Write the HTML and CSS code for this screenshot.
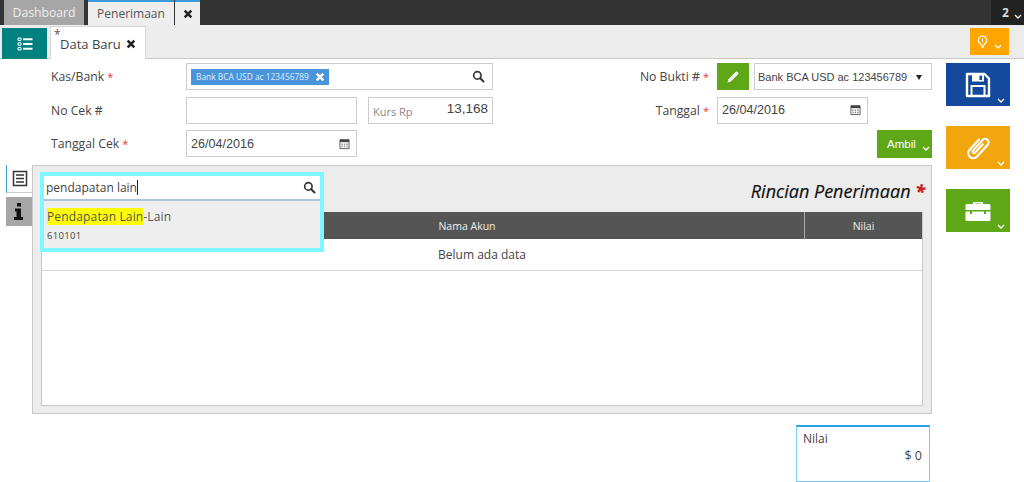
FILE: index.html
```html
<!DOCTYPE html>
<html lang="id">
<head>
<meta charset="utf-8">
<title>Penerimaan</title>
<link rel="stylesheet" href="styles.css">
</head>
<body>
<svg class="defs" width="0" height="0">
  <defs>
    <symbol id="i-search" viewBox="0 0 14 14"><circle cx="5.8" cy="5.8" r="4" fill="none" stroke="currentColor" stroke-width="1.8"/><path d="M8.8 8.8l3.6 3.6" stroke="currentColor" stroke-width="2.2" stroke-linecap="round"/></symbol>
    <symbol id="i-x" viewBox="0 0 12 12"><path d="M2 2l8 8M10 2l-8 8" stroke="currentColor" stroke-width="3" fill="none"/></symbol>
    <symbol id="i-chev" viewBox="0 0 8 5"><path d="M1 1l3 3 3-3" stroke="currentColor" stroke-width="1.3" fill="none"/></symbol>
    <symbol id="i-cal" viewBox="0 0 12 12"><path d="M1 1.500h10V11H1z" fill="#fff" stroke="#555"/><path d="M1 1h10v3H1z" fill="#444"/><path d="M2.500 5.500h1.500v1.500H2.500zM5.200 5.500h1.500v1.500H5.200zM8 5.500h1.500v1.500H8zM2.500 8h1.500v1.500H2.500zM5.200 8h1.500v1.500H5.200zM8 8h1.500v1.500H8z" fill="#888"/></symbol>
  </defs>
</svg>

<header class="topbar">
  <div class="tab tab-off">Dashboard</div>
  <div class="tab tab-on">Penerimaan</div>
  <div class="tab tab-close"><svg class="ico-x"><use href="#i-x"/></svg></div>
  <div class="top-count">2<svg class="chev"><use href="#i-chev"/></svg></div>
</header>

<nav class="subbar">
  <button class="list-btn" type="button">
    <svg width="16" height="14" viewBox="0 0 16 14"><path d="M1 1h3v2.400H1zM1 5.800h3v2.400H1zM1 10.600h3V13H1z" fill="none" stroke="#fff" stroke-width="1"/><path d="M6 1.200h9.500v2H6zM6 6h9.500v2H6zM6 10.800h9.500v2H6z" fill="#fff"/></svg>
  </button>
  <div class="doc-tab"><sup class="dirty">*</sup><span>Data Baru</span><svg class="ico-x"><use href="#i-x"/></svg></div>
  <button class="tip-btn" type="button">
    <svg width="11" height="14" viewBox="0 0 11 14"><path d="M5.500 1a4.200 4.200 0 0 0-2.400 7.600c.5.400.7.900.7 1.400h3.400c0-.5.200-1 .7-1.400A4.200 4.200 0 0 0 5.500 1z" fill="none" stroke="#fff" stroke-width="1.100"/><path d="M5 3.500h1v4H5z" fill="#fff"/><path d="M4 11h3v1.500H4z" fill="#fff"/></svg>
    <svg class="chev"><use href="#i-chev"/></svg>
  </button>
</nav>

<div class="page">
  <main class="main">
    <section class="form">
      <div class="form-left">
        <div class="row">
          <label class="lbl">Kas/Bank <b>*</b></label>
          <div class="field f-wide">
            <span class="chip">Bank BCA USD ac 123456789<svg class="ico-x"><use href="#i-x"/></svg></span>
            <svg class="ico-search"><use href="#i-search"/></svg>
          </div>
        </div>
        <div class="row">
          <label class="lbl">No Cek #</label>
          <div class="field f-mid"></div>
          <div class="field f-kurs"><span class="kurs-l">Kurs Rp</span><span class="kurs-v">13,168</span></div>
        </div>
        <div class="row">
          <label class="lbl">Tanggal Cek <b>*</b></label>
          <div class="field f-mid"><span class="val">26/04/2016</span><svg class="ico-cal"><use href="#i-cal"/></svg></div>
        </div>
      </div>
      <div class="form-right">
        <div class="row">
          <label class="lbl-r">No Bukti # <b>*</b></label>
          <button class="edit-btn" type="button"><svg width="14" height="14" viewBox="0 0 14 14"><path d="M1.500 12.500l.8-3.200L9.800 1.800a1 1 0 0 1 1.400 0l1 1a1 1 0 0 1 0 1.400L4.700 11.700z" fill="#f2f2f2"/></svg></button>
          <div class="field f-select"><span class="val-sm">Bank BCA USD ac 123456789</span><i class="caret"></i></div>
        </div>
        <div class="row">
          <label class="lbl-r">Tanggal <b>*</b></label>
          <div class="field f-date"><span class="val">26/04/2016</span><svg class="ico-cal"><use href="#i-cal"/></svg></div>
        </div>
        <div class="row row-end">
          <button class="ambil" type="button">Ambil<svg class="chev"><use href="#i-chev"/></svg></button>
        </div>
      </div>
    </section>

    <section class="detail">
      <div class="side-tabs">
        <div class="st st-on"><svg width="16" height="17" viewBox="0 0 16 17"><path d="M1.500 1.500h13v14h-13z" fill="none" stroke="#333" stroke-width="1.500"/><path d="M4 5h8M4 8.500h8M4 12h8" stroke="#333" stroke-width="1.500"/></svg></div>
        <div class="st st-info"><svg width="10" height="17" viewBox="0 0 10 17"><path d="M3 0h4v3.500H3zM1 5.500h6V14h2v3H0v-3h2.500V8.500H1z" fill="#111"/></svg></div>
      </div>
      <div class="panel">
        <h2 class="title">Rincian Penerimaan <b>*</b></h2>
        <div class="table">
          <div class="thead"><div class="th th-name">Nama Akun</div><div class="th th-val">Nilai</div></div>
          <div class="empty">Belum ada data</div>
        </div>
        <div class="popup">
          <div class="popup-in"><span class="typed">pendapatan lain</span><i class="cursor"></i><svg class="ico-search"><use href="#i-search"/></svg></div>
          <div class="popup-item">
            <div class="pi-name"><mark>Pendapatan Lain</mark>-Lain</div>
            <div class="pi-code">610101</div>
          </div>
        </div>
      </div>
    </section>

    <section class="summary">
      <div class="sum-box"><div class="sum-l">Nilai</div><div class="sum-v">$ 0</div></div>
    </section>
  </main>

  <aside class="actions">
    <button class="act act-blue" type="button">
      <svg width="26" height="26" viewBox="0 0 26 26"><path d="M2 2H19.500L24 6.500V24H2Z" fill="none" stroke="#fff" stroke-width="2.400" stroke-linejoin="round"/><path fill-rule="evenodd" d="M7 2H19V9.500H7ZM14.500 3.500V8H17V3.500Z" fill="#fff"/><path d="M6.500 23.500V14H19.500V23.500" fill="none" stroke="#fff" stroke-width="2"/></svg>
      <svg class="chev"><use href="#i-chev"/></svg>
    </button>
    <button class="act act-orange" type="button">
      <svg width="28" height="28" viewBox="0 0 28 28"><g transform="translate(6 -1) rotate(42 8 15)"><path d="M3 8V22a5 5 0 0 0 10 0V6a3.500 3.500 0 0 0-7 0V20a1.500 1.500 0 0 0 3 0V9" fill="none" stroke="#fff" stroke-width="2.200" stroke-linecap="round"/></g></svg>
      <svg class="chev"><use href="#i-chev"/></svg>
    </button>
    <button class="act act-green" type="button">
      <svg width="26" height="20" viewBox="0 0 26 20"><path fill-rule="evenodd" d="M8 3V1h10v2h6a1.500 1.500 0 0 1 1.500 1.500V9h-25V4.500A1.500 1.500 0 0 1 2 3zm2 0h6V2.500h-6z" fill="#fff"/><path d="M.5 10.500H5V13h2v-2.500h12V13h2v-2.500h4.500V19a1 1 0 0 1-1 1h-23a1 1 0 0 1-1-1z" fill="#fff"/></svg>
      <svg class="chev"><use href="#i-chev"/></svg>
    </button>
  </aside>
</div>
</body>
</html>
```

FILE: styles.css
```css
* { box-sizing: border-box; }
html, body { margin: 0; padding: 0; }
body {
  width: 1024px;
  height: 482px;
  overflow: hidden;
  background: #fff;
  color: #444;
  font-family: "Open Sans", "Noto Sans", sans-serif;
  font-size: 12px;
}
button { border: 0; padding: 0; font: inherit; cursor: pointer; }
.defs { position: absolute; }
.ico-x { width: 10px; height: 10px; color: #222; }
.chev { width: 8px; height: 5px; color: #fff; }

/* top bar */
.topbar {
  display: flex;
  height: 25px;
  padding-left: 4px;
  background: #333;
}
.tab {
  display: flex;
  align-items: center;
  justify-content: center;
  height: 25px;
}
.tab-off { width: 80px; background: #a6a6a6; color: #eee; font-size: 12.2px; }
.tab-on {
  width: 86px;
  margin-left: 4px;
  background: #eee;
  border-top: 2px solid #3a9ad9;
  color: #555;
  font-size: 12px;
}
.tab-close { width: 25px; margin-left: 1px; background: #eee; border-top: 2px solid #3a9ad9; }
.top-count {
  display: flex;
  align-items: center;
  gap: 5px;
  width: 33px;
  margin-left: auto;
  padding-left: 11px;
  background: #222;
  color: #ddd;
  font-weight: 700;
  font-size: 12px;
}
.top-count .chev { margin-top: 7px; }

/* sub bar */
.subbar {
  display: flex;
  align-items: flex-end;
  height: 34px;
  padding-left: 2px;
  background: #ececec;
  border-bottom: 1px solid #c8c8c8;
}
.list-btn {
  display: flex;
  align-items: center;
  justify-content: center;
  width: 45px;
  height: 31px;
  margin-bottom: -1px;
  background: #008080;
}
.doc-tab {
  position: relative;
  display: flex;
  align-items: center;
  gap: 5px;
  width: 96px;
  height: 33px;
  margin-left: 3px;
  margin-bottom: -1px;
  padding: 2px 0 0 9px;
  background: #fff;
  border: 1px solid #d8d8d8;
  border-bottom: 0;
  font-size: 13px;
  color: #444;
}
.dirty { position: absolute; left: 3px; top: 1px; font-size: 12px; line-height: 14px; color: #555; }
.tip-btn {
  display: flex;
  align-items: center;
  justify-content: center;
  gap: 6px;
  width: 39px;
  height: 27px;
  margin: 0 15px 3px auto;
  background: #ffa500;
}
.tip-btn .chev { margin-top: 9px; }

/* layout */
.page { display: flex; align-items: flex-start; }
.main { width: 932px; flex: none; }

/* form */
.form {
  display: flex;
  justify-content: space-between;
  height: 106px;
  padding-top: 4px;
}
.row { display: flex; align-items: center; height: 27px; margin-bottom: 6.5px; }
.form-left { padding-left: 51px; }
.lbl { width: 135px; font-size: 12.2px; color: #444; }
.lbl b, .lbl-r b { color: #e33; font-weight: 400; font-size: 11px; }
.field {
  position: relative;
  display: flex;
  align-items: center;
  flex: none;
  height: 27px;
  background: #fff;
  border: 1px solid #ccc;
}
.f-wide { width: 307px; padding-left: 4px; }
.f-mid { width: 171px; padding-left: 4px; }
.f-kurs { width: 125px; margin-left: 11px; padding: 0 4px; justify-content: space-between; }
.kurs-l { margin-top: 3px; font-size: 11px; color: #888; }
.kurs-v { margin-top: -3px; font-family: "Liberation Sans", sans-serif; font-size: 13.5px; color: #444; }
.chip {
  display: flex;
  align-items: center;
  justify-content: space-between;
  width: 138px;
  height: 16px;
  padding: 0 4px 0 5px;
  background: #4a94dc;
  color: #dfeefb;
  font-size: 8.4px;
  white-space: nowrap;
}
.chip .ico-x { color: #fff; width: 10px; height: 10px; }
.ico-search { position: absolute; right: 7px; top: 50%; width: 13px; height: 13px; margin-top: -6.5px; color: #333; }
.ico-cal { position: absolute; right: 6px; top: 50%; width: 11px; height: 12px; margin-top: -6px; }
.val { font-family: "Liberation Sans", sans-serif; font-size: 12.6px; color: #444; }
.val-sm { font-family: "Liberation Sans", sans-serif; font-size: 11px; color: #444; white-space: nowrap; }
.form-right { display: flex; flex-direction: column; width: 300px; }
.form-right .row { justify-content: flex-end; }
.lbl-r { flex: none; margin-right: 8px; font-size: 12.2px; white-space: nowrap; }
.edit-btn {
  display: flex;
  align-items: center;
  justify-content: center;
  flex: none;
  width: 32px;
  height: 27px;
  margin-right: 5px;
  background: #5ea716;
}
.f-select { width: 178px; padding-left: 3px; }
.caret {
  position: absolute;
  right: 9px;
  top: 11px;
  border: 3.5px solid transparent;
  border-top: 5px solid #222;
  border-bottom: 0;
}
.f-date { width: 151px; margin-right: 64px; padding-left: 4px; }
.row-end { height: 28px; }
.ambil {
  display: flex;
  align-items: center;
  gap: 6px;
  width: 55px;
  height: 28px;
  padding-left: 10px;
  background: #5ea716;
  color: #fff;
  font-family: "Liberation Sans", sans-serif;
  font-size: 11.5px;
}
.ambil .chev { margin-top: 9px; }

/* detail */
.detail { display: flex; padding-left: 6px; }
.side-tabs { width: 26px; flex: none; }
.st { display: flex; align-items: center; justify-content: center; }
.st-on {
  height: 28px;
  margin-bottom: 4px;
  background: #fff;
  border-left: 1px solid #3a9ad9;
  border-bottom: 1px solid #ccc;
}
.st-info { height: 29px; background: #a6a6a6; }
.panel {
  position: relative;
  flex: 1;
  height: 249px;
  padding: 46px 8px 7px 8px;
  background: #ececec;
  border: 1px solid #c8c8c8;
}
.title {
  position: absolute;
  right: 6px;
  top: 13px;
  margin: 0;
  color: #111;
  font-size: 18px;
  font-weight: 400;
  font-style: italic;
  line-height: 24px;
  -webkit-text-stroke: .2px #111;
}
.title b { color: #e11; font-weight: 700; }
.table { height: 194px; background: #fff; border: 1px solid #c8c8c8; border-top: 0; }
.thead { display: flex; height: 27px; background: #555; color: #eee; font-size: 10.5px; }
.th { display: flex; align-items: center; justify-content: center; }
.th-name { flex: 1; padding-left: 88px; }
.th-val { width: 118px; border-left: 1px solid #aaa; }
.empty {
  display: flex;
  align-items: center;
  justify-content: center;
  height: 32px;
  border-bottom: 1px solid #d8d8d8;
  font-size: 12px;
  color: #444;
}
.popup {
  position: absolute;
  left: 7px;
  top: 6px;
  width: 284px;
  height: 80px;
  background: #eee;
  border: 4px solid #7ff7ff;
}
.popup-in {
  position: relative;
  display: flex;
  align-items: center;
  height: 25px;
  padding-left: 2px;
  background: #fff;
  border-bottom: 2px solid #b0c4de;
  color: #444;
  font-size: 12px;
}
.popup-in .ico-search { right: 4px; }
.cursor { width: 1px; height: 15px; background: #222; }
.popup-item { padding: 6px 3px 4px; }
.pi-name { height: 20px; font-size: 12px; line-height: 19px; letter-spacing: .15px; color: #555; }
mark { background: #ff0; color: #555; }
.pi-code { margin-top: 2px; font-size: 9.5px; color: #444; letter-spacing: .3px; }

/* summary */
.summary { display: flex; justify-content: flex-end; padding: 11px 2px 0 0; }
.sum-box {
  width: 134px;
  height: 57px;
  padding: 4px 7px 4px 6px;
  background: #fff;
  border: 1px solid #7cc9f5;
  border-top: 2px solid #2ea2e6;
  font-size: 12px;
  color: #444;
}
.sum-l { line-height: 16px; }
.sum-v { text-align: right; line-height: 16px; margin-top: 1px; font-size: 12.5px; }

/* right actions */
.actions { display: flex; flex-direction: column; gap: 20px; margin: 4px 0 0 14px; }
.act {
  position: relative;
  display: flex;
  align-items: center;
  justify-content: center;
  width: 64px;
  height: 43px;
}
.act .chev { position: absolute; right: 5px; bottom: 3px; }
.act-blue { background: #14489c; }
.act-orange { background: #f2a60d; }
.act-green { background: #5ea716; }
```
